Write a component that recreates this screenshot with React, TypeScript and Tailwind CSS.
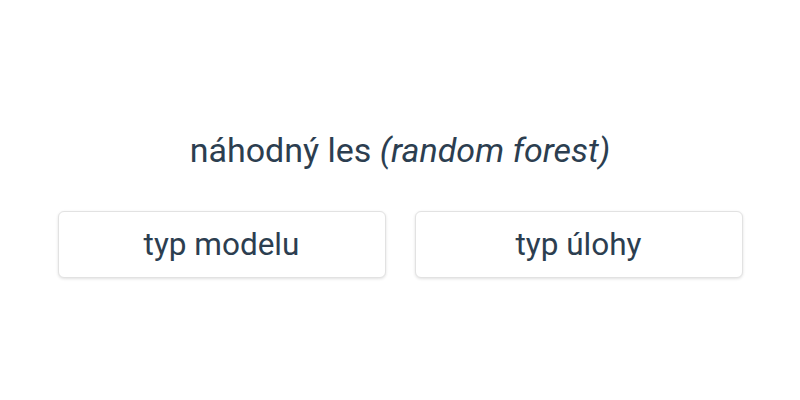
export default function App() {
  return (
    <div className="flex h-[400px] w-[800px] flex-col items-center justify-center bg-white text-[#2c3e50] [font-family:Roboto,sans-serif]">
      <h1 className="mt-[8px] text-[34px] leading-[40px]">
        náhodný les <i>(random forest)</i>
      </h1>
      <div className="mt-[41px] flex gap-[29px]">
        <button className="h-[67px] w-[328px] rounded-[6px] border border-[#e2e2e2] bg-white text-[31.5px] shadow-[0_1px_3px_rgba(0,0,0,0.12)]">
          typ modelu
        </button>
        <button className="h-[67px] w-[328px] rounded-[6px] border border-[#e2e2e2] bg-white text-[31.5px] shadow-[0_1px_3px_rgba(0,0,0,0.12)]">
          typ úlohy
        </button>
      </div>
    </div>
  );
}
